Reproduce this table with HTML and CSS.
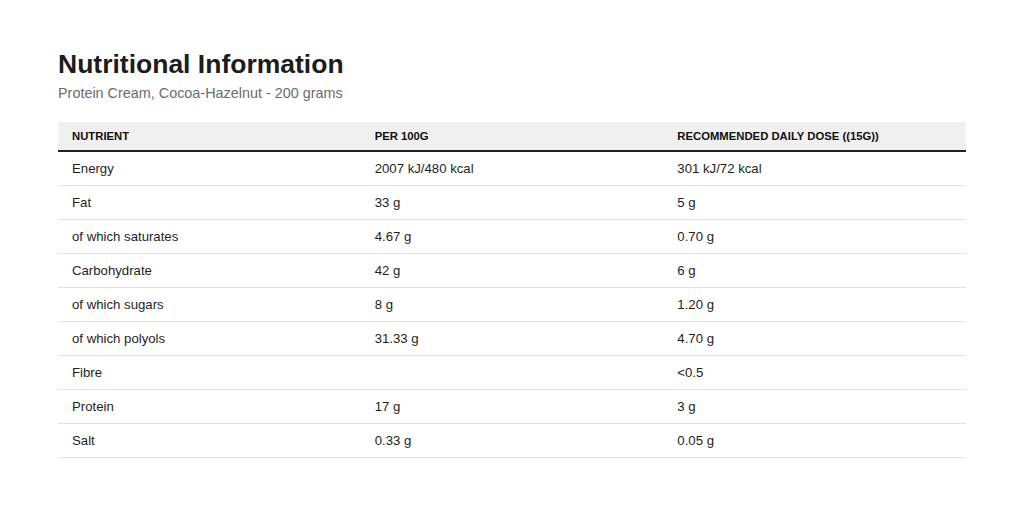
FILE: index.html
```html
<!DOCTYPE html>
<html lang="en">
<head>
<meta charset="utf-8">
<title>Nutritional Information</title>
<link rel="stylesheet" href="styles.css">
</head>
<body>
<main class="page">
  <h1 class="title">Nutritional Information</h1>
  <p class="subtitle">Protein Cream, Cocoa-Hazelnut - 200 grams</p>
  <table class="nutrition">
    <thead>
      <tr><th>Nutrient</th><th>Per 100g</th><th>Recommended Daily Dose ((15g))</th></tr>
    </thead>
    <tbody>
      <tr><td>Energy</td><td>2007 kJ/480 kcal</td><td>301 kJ/72 kcal</td></tr>
      <tr><td>Fat</td><td>33 g</td><td>5 g</td></tr>
      <tr><td>of which saturates</td><td>4.67 g</td><td>0.70 g</td></tr>
      <tr><td>Carbohydrate</td><td>42 g</td><td>6 g</td></tr>
      <tr><td>of which sugars</td><td>8 g</td><td>1.20 g</td></tr>
      <tr><td>of which polyols</td><td>31.33 g</td><td>4.70 g</td></tr>
      <tr><td>Fibre</td><td></td><td>&lt;0.5</td></tr>
      <tr><td>Protein</td><td>17 g</td><td>3 g</td></tr>
      <tr><td>Salt</td><td>0.33 g</td><td>0.05 g</td></tr>
    </tbody>
  </table>
</main>
</body>
</html>
```

FILE: styles.css
```css
html, body {
  margin: 0;
  padding: 0;
  background: #ffffff;
}
body {
  font-family: "Liberation Sans", Arial, sans-serif;
  color: #1a1a1a;
}
.page {
  padding: 48px 58px;
}
.title {
  margin: 0;
  font-size: 26.5px;
  font-weight: 700;
  line-height: 32px;
  color: #1c1c1c;
}
.subtitle {
  margin: 4px 0 0;
  font-size: 14.4px;
  line-height: 18px;
  color: #6b6b6b;
}
.nutrition {
  margin-top: 20px;
  width: 100%;
  border-collapse: collapse;
  table-layout: fixed;
}
.nutrition th {
  background: #f0f0f0;
  text-align: left;
  font-size: 11.3px;
  font-weight: 700;
  text-transform: uppercase;
  color: #111;
  padding: 0 14px;
  height: 28px;
  border-bottom: 2px solid #222;
}
.nutrition td {
  font-size: 13.2px;
  color: #1e1e1e;
  padding: 0 14px;
  height: 33px;
  border-bottom: 1px solid #e2e2e2;
}
```
